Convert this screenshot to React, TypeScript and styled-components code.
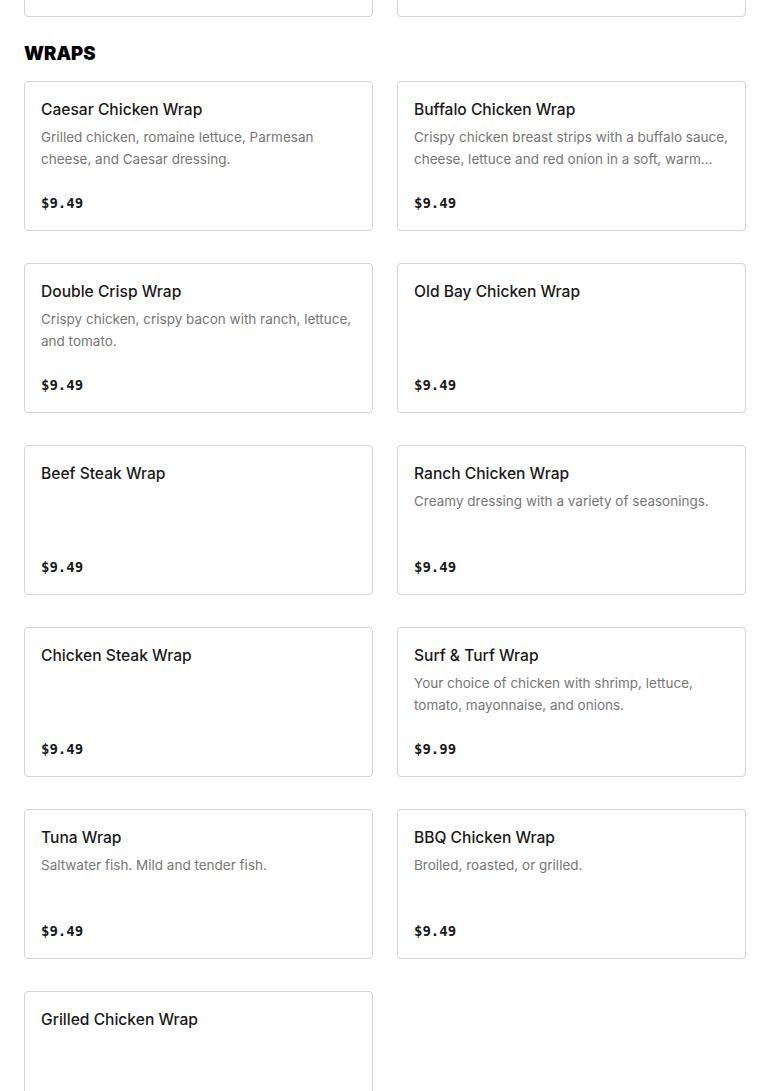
import { createGlobalStyle, styled } from "styled-components";

type Item = { name: string; desc?: string; price: string };

const previous: Item[] = [
  { name: "Classic Sub", desc: "", price: "$9.49" },
  { name: "Veggie Sub", desc: "", price: "$9.49" },
];

const wraps: Item[] = [
  {
    name: "Caesar Chicken Wrap",
    desc: "Grilled chicken, romaine lettuce, Parmesan cheese, and Caesar dressing.",
    price: "$9.49",
  },
  {
    name: "Buffalo Chicken Wrap",
    desc: "Crispy chicken breast strips with a buffalo sauce, cheese, lettuce and red onion in a soft, warm tortilla.",
    price: "$9.49",
  },
  {
    name: "Double Crisp Wrap",
    desc: "Crispy chicken, crispy bacon with ranch, lettuce, and tomato.",
    price: "$9.49",
  },
  { name: "Old Bay Chicken Wrap", price: "$9.49" },
  { name: "Beef Steak Wrap", price: "$9.49" },
  {
    name: "Ranch Chicken Wrap",
    desc: "Creamy dressing with a variety of seasonings.",
    price: "$9.49",
  },
  { name: "Chicken Steak Wrap", price: "$9.49" },
  {
    name: "Surf & Turf Wrap",
    desc: "Your choice of chicken with shrimp, lettuce, tomato, mayonnaise, and onions.",
    price: "$9.99",
  },
  {
    name: "Tuna Wrap",
    desc: "Saltwater fish. Mild and tender fish.",
    price: "$9.49",
  },
  {
    name: "BBQ Chicken Wrap",
    desc: "Broiled, roasted, or grilled.",
    price: "$9.49",
  },
  { name: "Grilled Chicken Wrap", price: "$9.49" },
];

const MenuCard = ({ item }: { item: Item }) => (
  <Card>
    <Name>{item.name}</Name>
    {item.desc && <Desc>{item.desc}</Desc>}
    <Price>{item.price}</Price>
  </Card>
);

const App = () => {
  return (
    <>
      <GlobalStyle />
      <Page>
        <Grid>
          {previous.map((item) => (
            <MenuCard key={item.name} item={item} />
          ))}
        </Grid>
        <Section>
          <Heading>Wraps</Heading>
          <Grid>
            {wraps.map((item) => (
              <MenuCard key={item.name} item={item} />
            ))}
          </Grid>
        </Section>
      </Page>
    </>
  );
};

export default App;

const GlobalStyle = createGlobalStyle`
  * {
    box-sizing: border-box;
  }
  body {
    margin: 0;
    background: #fff;
    font-family: "Inter", "Liberation Sans", sans-serif;
    color: #191919;
  }
`;

// page is scrolled: the previous section's last row peeks in at the top
const Page = styled.div`
  margin-top: -133px;
  padding: 0 24px 40px;
`;

const Section = styled.section`
  padding-top: 24px;
`;

const Heading = styled.h2`
  margin: 0 0 16px;
  font-size: 18.5px;
  line-height: 24px;
  font-weight: 900;
  text-transform: uppercase;
  color: #000;
`;

const Grid = styled.div`
  display: grid;
  grid-template-columns: 1fr 1fr;
  column-gap: 24px;
  row-gap: 32px;
`;

const Card = styled.div`
  display: flex;
  flex-direction: column;
  height: 150px;
  padding: 17px 16px;
  border: 1px solid #d4d4d4;
  border-radius: 4px;
  background: #fff;
`;

const Name = styled.div`
  font-size: 15.6px;
  line-height: 22px;
  font-weight: 500;
  color: #191919;
`;

const Desc = styled.p`
  margin: 5px 0 0;
  font-size: 13.5px;
  line-height: 22px;
  color: #767676;
  display: -webkit-box;
  -webkit-line-clamp: 2;
  -webkit-box-orient: vertical;
  overflow: hidden;
`;

const Price = styled.div`
  margin-top: auto;
  font-family: "DejaVu Sans Mono", "Liberation Mono", monospace;
  font-size: 14px;
  line-height: 20px;
  font-weight: 700;
  color: #191919;
`;
